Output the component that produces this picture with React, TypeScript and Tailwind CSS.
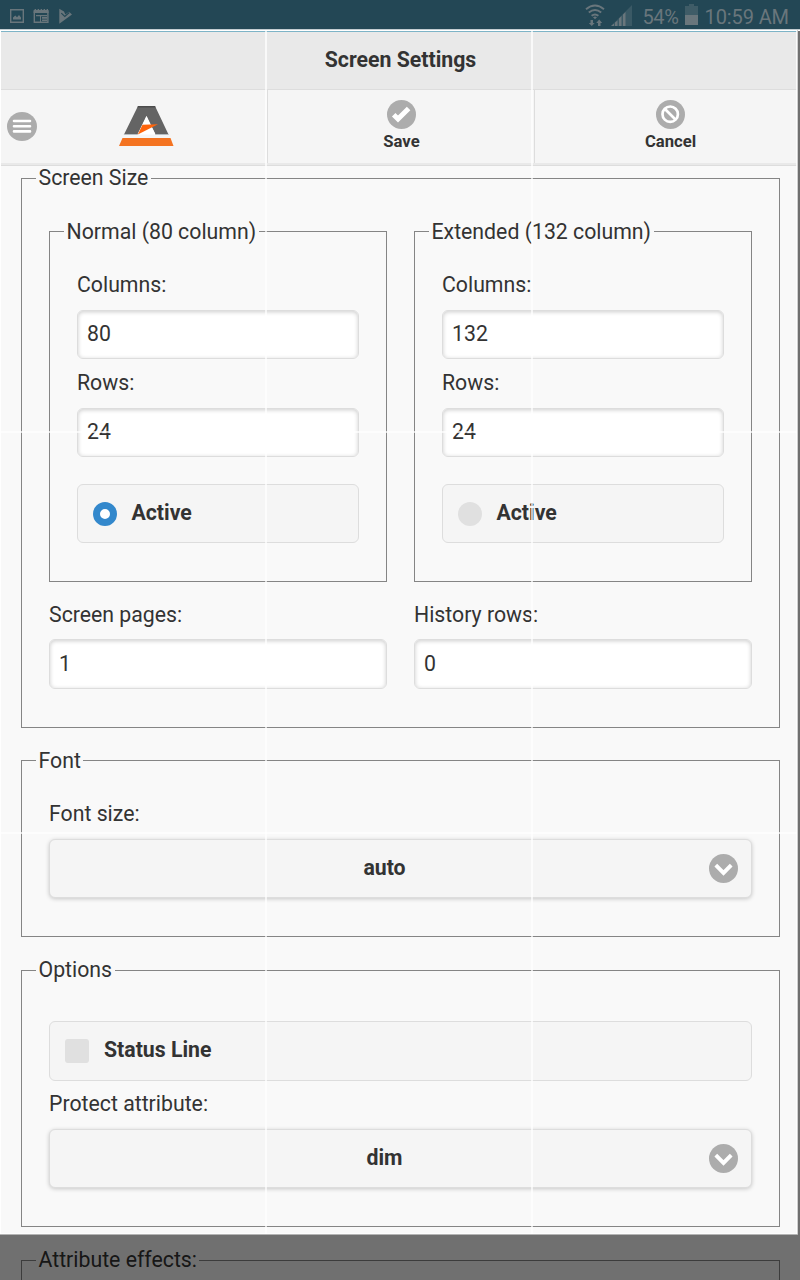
import React from "react";

const Disc = ({ children }: { children: React.ReactNode }) => (
  <svg className="block h-[29px] w-[29px] shrink-0" viewBox="0 0 29 29">
    <circle cx="14.5" cy="14.5" r="14.5" fill="#acacac" />
    {children}
  </svg>
);

type GroupProps = { title: string; className: string; nudge?: boolean; children?: React.ReactNode };

const Group = ({ title, className, nudge, children }: GroupProps) => (
  <fieldset className={"min-w-0 border border-[#858585] px-[27px] " + className}>
    <legend
      className={
        "ml-[-13px] h-[27px] pr-[2.5px] pl-[2.5px] whitespace-nowrap " + (nudge ? "leading-[27px]" : "leading-[25px]")
      }
    >
      {title}
    </legend>
    {children}
  </fieldset>
);

const inputBase =
  "rounded-[6px] border border-[#dddddd] bg-white pl-[9px] shadow-[inset_0_1px_4px_rgba(0,0,0,0.2)] ";

const Field = ({ label, value, tall }: { label: string; value: string; tall?: boolean }) => (
  <div>
    <label className={tall ? "block h-[48px] pt-[10px] leading-[28px]" : "block h-[49px] pt-[10px] leading-[28px]"}>
      {label}
    </label>
    <div className={inputBase + (tall ? "h-[50px] leading-[48px]" : "h-[49px] leading-[46px]")}>{value}</div>
  </div>
);

const Choice = ({ active }: { active?: boolean }) => (
  <div className="mt-[27px] flex h-[59px] items-center rounded-[6px] border border-[#dddddd] bg-[#f5f5f5] pl-[15px] font-bold">
    {active ? (
      <span className="h-6 w-6 rounded-full border-[7px] border-[#3388cc] bg-white" />
    ) : (
      <span className="h-6 w-6 rounded-full bg-[#e0e0e0]" />
    )}
    <span className="-mt-[1px] ml-[14.5px]">Active</span>
  </div>
);

const Picker = ({ label, value, tight }: { label: string; value: string; tight?: boolean }) => (
  <div>
    <label className={tight ? "block h-[48px] pt-[9px] leading-[28px]" : "block h-[49px] pt-[10px] leading-[28px]"}>
      {label}
    </label>
    <div className="flex h-[59px] items-center rounded-[6px] border border-[#dddddd] bg-[#f5f5f5] pr-[13px] pl-[10px] font-bold shadow-[0_1px_4px_rgba(0,0,0,0.2)]">
      <span className="-mt-[2px] flex-1 text-center">{value}</span>
      <Disc>
        <path d="M6.800 11.200 14.500 18.900 22.200 11.200" fill="none" stroke="#fff" strokeWidth="3.900" />
      </Disc>
    </div>
  </div>
);

const StatusBar = () => (
  <div className="flex h-[29px] items-start bg-[#234755] text-[#69767c]">
    <svg className="mt-[8px] ml-[9px] h-4 w-[64px]" viewBox="0 0 64 16">
      <path d="M1.700 1.700h12.600v12.600H1.700z" fill="none" stroke="#69767c" strokeWidth="1.400" />
      <path d="M4 11.500V9.500l2.300-2 1.700 1.700L10 7l2 2.500v2z" fill="#69767c" />
      <path d="M25.300 4h13.600v10.300H25.300z" fill="none" stroke="#69767c" strokeWidth="1.400" />
      <path d="M24.600 2h1V1h1.500v1h1.500V1h1.500v1h1.500V1h1.500v1h1.500V1h1.500v1h1.500V1H39v1h.600v3h-15zM27 7h11v1.300H27zM33 9h5v1.800h-5zM33 11.500h5V13h-5zM31 8h1v6h-1z" fill="#69767c" />
      <path d="M50.300.800 55 3.500l1.300 3L60 3.700 63 6.600 50.300 15.700z" fill="#69767c" />
      <path d="m52.300 5.200 3.500 3.300 4.500-4" fill="none" stroke="#234755" strokeWidth="1.100" />
    </svg>
    <svg className="mt-[3px] ml-[510.5px] h-[25px] w-[50px]" viewBox="0 0 50 25">
      <path
        d="M2 6.200Q11-1 20 6.200M4.800 9.600q6.200-5.200 12.400 0M7.600 12.800q3.400-2.800 6.800 0"
        fill="none"
        stroke="#69767c"
        strokeWidth="1.900"
      />
      <path d="m9 14.200 2 2 2-2q-2-1.200-4 0M6.500 17H9v3h1.700L7.750 23l-2.950-3h1.700zM14 23v-3h-1.800l3-3.500 3 3.500H16.500v3z" fill="#69767c" />
      <path d="M27 23 48 2v21z" fill="#3a5965" />
      <path d="M27 23l3-2.500V23zM31 19.500l2.500-2V23H31zM35 15.500l2.500-2.500V23H35zM39 11.500l2.500-2.500V23H39z" fill="#69767c" />
    </svg>
    <span className="ml-[9px] w-[37px] text-[20px] leading-[34px] tracking-[-0.4px] whitespace-nowrap">54%</span>
    <svg className="mt-[4px] ml-[5px] h-[22px] w-[13px]" viewBox="0 0 13 22">
      <path d="M0 2h4V0h5v2h4v19H0z" fill="#3f5c67" />
      <path d="M0 11h13v10H0z" fill="#69767c" />
    </svg>
    <span className="ml-[7px] text-[20px] leading-[34px] tracking-[-0.1px] whitespace-nowrap">10:59 AM</span>
  </div>
);

export default function App() {
  return (
    <div className="relative h-[1280px] w-[800px] overflow-hidden bg-[#f9f9f9] font-['Roboto',sans-serif] text-[21.28px] text-[#333333]">
      <StatusBar />
      <header className="h-[136px] bg-[#f5f5f5] shadow-[0_1px_0_#dddddd]">
        <div className="h-[2px] border-t border-[#c3cdd1] bg-white" />
        <h1 className="h-[59px] border-t border-b border-t-[#7eb4c7] border-b-[#dddddd] bg-[#e9e9e9] pl-px text-center leading-[55px] font-bold">
          Screen Settings
        </h1>
        <div className="flex h-[75px] border-b-2 border-[#e9e9e9] text-[16.67px] font-bold">
          <div className="flex w-[267px] items-start pl-[7px]">
            <svg className="mt-[22px] h-[29px] w-[30px]" viewBox="0 0 30 29">
              <ellipse cx="15" cy="14.5" rx="15" ry="14.5" fill="#acacac" />
              <path d="M7 9h16M7 14.200h16M7 19.400h16" stroke="#fff" strokeWidth="2.600" strokeLinecap="round" />
            </svg>
            <svg className="mt-[16px] ml-[82px] h-[40px] w-[55px]" viewBox="0 0 55 40">
              <path d="M19 0h17l13.500 28.500H36.500L27.500 10l-9 18.500H5z" fill="#646464" />
              <path d="M19 0h17l.700 1.500H18.300z" fill="#4c4c4c" />
              <path d="m27.500 10 9 18.500h-18z" fill="#fff" />
              <path d="M23.500 18.700 39 18.200 18.800 28.500z" fill="#ff650c" />
              <path d="M3.500 32h48L54.500 40H0z" fill="#f47321" />
              <path d="M5 28.200h13l1 .9H4.600zM36 28.200h13.500l.5.900H36.500z" fill="#b9c3ca" />
            </svg>
          </div>
          <div className="flex w-[267px] flex-col items-center border-l border-[#dddddd] pt-[10px] pl-px">
            <Disc>
              <path d="m6.700 14.800 4.300 4.200L21.600 8.500" fill="none" stroke="#fff" strokeWidth="5" />
            </Disc>
            <span className="leading-[26px]">Save</span>
          </div>
          <div className="flex flex-1 flex-col items-center border-l border-[#dddddd] pt-[10px] pl-[6px]">
            <Disc>
              <g fill="none" stroke="#fff" strokeWidth="2.700">
                <circle cx="14.200" cy="14.200" r="7.700" />
                <path d="m8.700 8.700 11 11" />
              </g>
            </Disc>
            <span className="leading-[26px]">Cancel</span>
          </div>
        </div>
      </header>
      <main className="flex flex-col gap-[20px] pr-[20px] pl-[21px]">
        <Group title="Screen Size" className="-mb-px h-[563px]">
          <div className="grid grid-cols-2 gap-x-[27px] pt-[26px]">
            <Group title="Normal (80 column)" nudge className="h-[364px]">
              <div className="pt-[16px]">
                <Field label="Columns:" value="80" />
                <Field label="Rows:" value="24" />
                <Choice active />
              </div>
            </Group>
            <Group title="Extended (132 column)" nudge className="h-[364px]">
              <div className="pt-[16px]">
                <Field label="Columns:" value="132" />
                <Field label="Rows:" value="24" />
                <Choice />
              </div>
            </Group>
          </div>
          <div className="mt-[9px] grid grid-cols-2 gap-x-[27px]">
            <Field label="Screen pages:" value="1" tall />
            <Field label="History rows:" value="0" tall />
          </div>
        </Group>
        <Group title="Font" nudge className="h-[190px]">
          <div className="pt-[16px]">
            <Picker label="Font size:" value="auto" />
          </div>
        </Group>
        <Group title="Options" className="h-[270px]">
          <div className="pt-[37px]">
            <div className="flex h-[60px] items-center rounded-[6px] border border-[#dddddd] bg-[#f5f5f5] pl-[15px] font-bold">
              <span className="h-6 w-6 rounded-[3px] bg-[#e0e0e0]" />
              <span className="-mt-[3px] ml-[15px]">Status Line</span>
            </div>
            <Picker label="Protect attribute:" value="dim" tight />
          </div>
        </Group>
        <Group title="Attribute effects:" className="h-[100px]" />
      </main>
      <div className="absolute inset-x-0 bottom-0 h-[45px] bg-black/55" />
      <div className="absolute top-[31px] right-0 h-[1204px] w-[2px] bg-[#707070]" />
      <div className="absolute top-[30px] left-0 h-[1204px] w-px bg-white" />
      <div className="absolute top-[1233px] left-0 h-[2px] w-[798px] border-b border-[#b4b4b4] bg-white/70" />
      <div className="absolute top-[30px] left-[265px] h-[1204px] w-[2px] bg-white/70" />
      <div className="absolute top-[30px] left-[531px] h-[1204px] w-[2px] bg-white/70" />
      <div className="absolute top-[431px] left-0 h-[2px] w-[798px] bg-white/70" />
      <div className="absolute top-[832px] left-0 h-[2px] w-[798px] bg-white/70" />
      <div className="absolute top-[30px] left-[796px] h-[1204px] w-[2px] border-r border-[#d0d0d0] bg-white/80" />
    </div>
  );
}
